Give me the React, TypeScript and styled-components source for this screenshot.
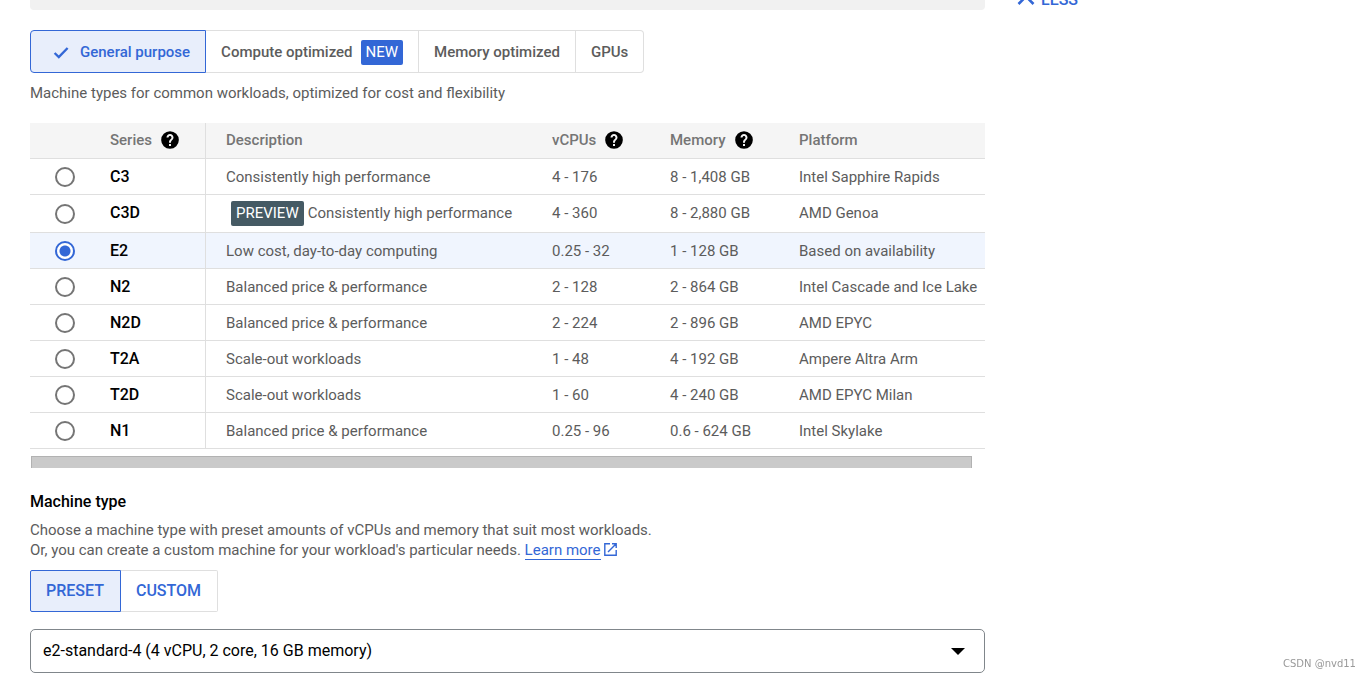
import React, { useState } from "react";
import styled, { createGlobalStyle, css } from "styled-components";

const GlobalStyle = createGlobalStyle`
  *, *::before, *::after { box-sizing: border-box; }
  body {
    margin: 0;
    background: #fff;
    color: #5c5c5c;
    font-family: Roboto, "Liberation Sans", sans-serif;
    font-size: 15px;
    line-height: 20px;
  }
  button, input, select { font: inherit; }
`;

const blue = "#3367d6";
const line = "#dfdfdf";

const Page = styled.div`
  display: grid;
  grid-template-columns: minmax(0, 1fr) 356px;
  column-gap: 30px;
  padding-left: 30px;
`;

const Main = styled.main`
  min-width: 0;
`;

const Aside = styled.aside`
  overflow: hidden;
`;

const LessButton = styled.button`
  display: flex;
  align-items: center;
  gap: 6px;
  margin: -10px 0 0;
  padding: 0 0 0 2px;
  border: 0;
  background: none;
  color: ${blue};
  font-size: 16px;
  font-weight: 500;
  line-height: 20px;
`;

const PanelEnd = styled.div`
  height: 10px;
  border-radius: 0 0 4px 4px;
  background: #f1f1f1;
`;

const Tabs = styled.div`
  display: flex;
  width: max-content;
  margin-top: 20px;
`;

const Toggle = styled.button<{ $active?: boolean; $large?: boolean }>`
  display: flex;
  align-items: center;
  height: 43px;
  padding: 0 15px;
  border: 1px solid ${line};
  border-left-width: 0;
  background: #fff;
  color: #5c5c5c;
  font-weight: 500;
  white-space: nowrap;

  &:first-child { border-left-width: 1px; border-radius: 4px 0 0 4px; }
  &:last-child { border-radius: 0 4px 4px 0; }

  ${(p) =>
    p.$large &&
    css`
      height: 42px;
      padding: 0 16px 0 15px;
      color: ${blue};
      font-size: 16px;
      &:first-child { border-radius: 2px 0 0 2px; }
      &:last-child { border-radius: 0 2px 2px 0; }
    `}

  ${(p) =>
    p.$active &&
    css`
      border-color: ${blue};
      background: #e8eefb;
      color: ${blue};
    `}
`;

const CheckIcon = styled.svg`
  width: 20px;
  height: 20px;
  margin: 0 9px 0 5px;
`;

const Badge = styled.span<{ $tone: "new" | "preview" }>`
  display: inline-block;
  height: 25px;
  padding: 0 5px;
  border-radius: 2px;
  color: #fff;
  font-weight: 400;
  line-height: 25px;
  background: ${(p) => (p.$tone === "new" ? blue : "#455a64")};
  margin: ${(p) => (p.$tone === "new" ? "1px 0 0 8px" : "1px 4px 0 5px")};
`;

const Hint = styled.p`
  margin: 10px 0 0;
`;

const SeriesTable = styled.table`
  width: 100%;
  margin-top: 20px;
  table-layout: fixed;
  border-collapse: separate;
  border-spacing: 0;
`;

const Col = styled.col<{ $w?: number }>`
  width: ${(p) => (p.$w ? `${p.$w}px` : "auto")};
`;

const HeadCell = styled.th<{ $divider?: boolean }>`
  height: 36px;
  padding: 0 0 2px 20px;
  border-bottom: 1px solid ${line};
  border-right: ${(p) => (p.$divider ? `1px solid ${line}` : "0")};
  background: #f5f5f5;
  color: #757575;
  font-weight: 500;
  text-align: left;
`;

const HeadLabel = styled.span`
  display: flex;
  align-items: center;
  gap: 8px;
`;

const Row = styled.tr<{ $selected: boolean; $tall: boolean }>`
  height: ${(p) => (p.$tall ? 38 : 36)}px;
  background: ${(p) => (p.$selected ? "#f0f5fe" : "#fff")};

  & > td:not(:first-child) {
    padding-bottom: ${(p) => (p.$tall ? 2 : 0)}px;
  }
`;

const Cell = styled.td`
  padding: 0 0 0 20px;
  border-bottom: 1px solid ${line};
  white-space: nowrap;
`;

const RadioCell = styled(Cell)`
  padding-left: 25px;
`;

const NameCell = styled(Cell)`
  border-right: 1px solid ${line};
  color: #000;
  font-size: 16px;
  font-weight: 500;
`;

const CellLine = styled.span`
  display: flex;
  align-items: center;
  height: 20px;
`;

const Radio = styled.input`
  display: block;
  appearance: none;
  width: 20px;
  height: 20px;
  margin: 0;
  border: 2px solid #757575;
  border-radius: 50%;
  background: #fff;

  &:checked {
    border-color: ${blue};
    background: radial-gradient(circle, ${blue} 5px, #fff 6px);
  }
`;

const ScrollTrack = styled.div`
  margin-top: 7px;
  padding: 0 13px 0 1px;
`;

const ScrollThumb = styled.div`
  height: 12px;
  border: 1px solid #b2b2b2;
  border-bottom: 0;
  background: #cacaca;
`;

const Title = styled.h2`
  margin: 24px 0 8px;
  color: #000;
  font-size: 16px;
  font-weight: 500;
  line-height: 20px;
`;

const Copy = styled.p`
  margin: 0;
`;

const LearnMore = styled.a`
  display: inline-block;
  height: 20px;
  border-bottom: 1px solid ${blue};
  color: ${blue};
  text-decoration: none;
  line-height: 20px;
  vertical-align: top;
`;

const ExternalIcon = styled.svg`
  width: 13px;
  height: 13px;
  margin-left: 3px;
  vertical-align: -1px;
`;

const ModeTabs = styled(Tabs)`
  margin-top: 10px;
`;

const SelectBox = styled.div`
  display: grid;
  align-items: center;
  margin: 17px 0 4px;

  & > * { grid-area: 1 / 1; }
`;

const Select = styled.select`
  width: 100%;
  height: 44px;
  padding: 0 40px 0 12px;
  appearance: none;
  border: 1px solid #80868b;
  border-radius: 5px;
  background: #fff;
  color: #000;
  font-size: 16px;
`;

const Arrow = styled.svg`
  justify-self: end;
  width: 14px;
  height: 7px;
  margin-right: 20px;
  pointer-events: none;
`;

const Watermark = styled.span`
  position: fixed;
  right: 15px;
  bottom: 6px;
  color: #999;
  font-family: "DejaVu Sans", sans-serif;
  font-size: 10px;
  line-height: 14px;
`;

const HelpIcon = () => (
  <svg width="20" height="20" viewBox="0 0 24 24" aria-hidden="true">
    <path
      fill="#000"
      d="M12 1.4A10.6 10.6 0 1 0 12 22.6A10.6 10.6 0 1 0 12 1.4zm1.2 17.8h-2.4v-2.4h2.4v2.4zm2.07-7.95l-.9.92C13.65 12.9 13.2 13.5 13.2 15.2h-2.4v-.7c0-1.1.45-2.1 1.17-2.83l1.24-1.26c.37-.36.59-.86.59-1.41 0-1-.8-1.8-1.8-1.8s-1.8.8-1.8 1.8H7.8c0-2.3 1.9-4.2 4.2-4.2s4.2 1.9 4.2 4.2c0 .88-.36 1.68-.93 2.25z"
    />
  </svg>
);

const families = [
  { name: "General purpose" },
  { name: "Compute optimized", isNew: true },
  { name: "Memory optimized" },
  { name: "GPUs" },
];

const series = [
  { name: "C3", text: "Consistently high performance", cpu: "4 - 176", memory: "8 - 1,408 GB", platform: "Intel Sapphire Rapids" },
  { name: "C3D", text: "Consistently high performance", cpu: "4 - 360", memory: "8 - 2,880 GB", platform: "AMD Genoa", preview: true },
  { name: "E2", text: "Low cost, day-to-day computing", cpu: "0.25 - 32", memory: "1 - 128 GB", platform: "Based on availability" },
  { name: "N2", text: "Balanced price & performance", cpu: "2 - 128", memory: "2 - 864 GB", platform: "Intel Cascade and Ice Lake" },
  { name: "N2D", text: "Balanced price & performance", cpu: "2 - 224", memory: "2 - 896 GB", platform: "AMD EPYC" },
  { name: "T2A", text: "Scale-out workloads", cpu: "1 - 48", memory: "4 - 192 GB", platform: "Ampere Altra Arm" },
  { name: "T2D", text: "Scale-out workloads", cpu: "1 - 60", memory: "4 - 240 GB", platform: "AMD EPYC Milan" },
  { name: "N1", text: "Balanced price & performance", cpu: "0.25 - 96", memory: "0.6 - 624 GB", platform: "Intel Skylake" },
];

export default function App() {
  const [family, setFamily] = useState("General purpose");
  const [selected, setSelected] = useState("E2");
  const [mode, setMode] = useState("PRESET");

  return (
    <>
      <GlobalStyle />
      <Page>
        <Main>
          <PanelEnd />
          <Tabs>
            {families.map((f) => (
              <Toggle key={f.name} type="button" $active={family === f.name} onClick={() => setFamily(f.name)}>
                {family === f.name && (
                  <CheckIcon viewBox="0 0 20 20" aria-hidden="true">
                    <path d="M3.6 11L7.8 15L16.6 6" fill="none" stroke={blue} strokeWidth="2.4" />
                  </CheckIcon>
                )}
                {f.name}
                {f.isNew && <Badge $tone="new">NEW</Badge>}
              </Toggle>
            ))}
          </Tabs>
          <Hint>Machine types for common workloads, optimized for cost and flexibility</Hint>

          <SeriesTable>
            <colgroup>
              <Col $w={60} />
              <Col $w={116} />
              <Col $w={326} />
              <Col $w={118} />
              <Col $w={129} />
              <Col />
            </colgroup>
            <thead>
              <tr>
                <HeadCell aria-label="Select" />
                <HeadCell $divider><HeadLabel>Series<HelpIcon /></HeadLabel></HeadCell>
                <HeadCell>Description</HeadCell>
                <HeadCell><HeadLabel>vCPUs<HelpIcon /></HeadLabel></HeadCell>
                <HeadCell><HeadLabel>Memory<HelpIcon /></HeadLabel></HeadCell>
                <HeadCell>Platform</HeadCell>
              </tr>
            </thead>
            <tbody>
              {series.map((s) => (
                <Row key={s.name} $selected={selected === s.name} $tall={!!s.preview}>
                  <RadioCell>
                    <Radio
                      type="radio"
                      name="series"
                      id={`series-${s.name}`}
                      checked={selected === s.name}
                      onChange={() => setSelected(s.name)}
                    />
                  </RadioCell>
                  <NameCell><label htmlFor={`series-${s.name}`}>{s.name}</label></NameCell>
                  <Cell>
                    <CellLine>
                      {s.preview && <Badge $tone="preview">PREVIEW</Badge>}
                      {s.text}
                    </CellLine>
                  </Cell>
                  <Cell>{s.cpu}</Cell>
                  <Cell>{s.memory}</Cell>
                  <Cell>{s.platform}</Cell>
                </Row>
              ))}
            </tbody>
          </SeriesTable>
          <ScrollTrack><ScrollThumb /></ScrollTrack>

          <Title>Machine type</Title>
          <Copy>
            Choose a machine type with preset amounts of vCPUs and memory that suit most workloads.
            <br />
            Or, you can create a custom machine for your workload's particular needs.{" "}
            <LearnMore href="#learn-more">Learn more</LearnMore>
            <ExternalIcon viewBox="0 0 13 13" fill="none" stroke={blue} strokeWidth="1.4" aria-hidden="true">
              <path d="M6 .8H.8V12.2H12.2V7M8 .8H12.2V5M12.2 .8L4 9" />
            </ExternalIcon>
          </Copy>
          <ModeTabs>
            {["PRESET", "CUSTOM"].map((m) => (
              <Toggle key={m} type="button" $large $active={mode === m} onClick={() => setMode(m)}>
                {m}
              </Toggle>
            ))}
          </ModeTabs>
          <SelectBox>
            <Select aria-label="Machine type" defaultValue="e2-standard-4">
              <option value="e2-standard-4">e2-standard-4 (4 vCPU, 2 core, 16 GB memory)</option>
            </Select>
            <Arrow viewBox="0 0 14 7" aria-hidden="true">
              <path d="M0 0H14L7 7Z" fill="#000" />
            </Arrow>
          </SelectBox>
        </Main>
        <Aside>
          <LessButton type="button">
            <svg width="18" height="20" viewBox="0 0 18 20" fill="none" stroke={blue} strokeWidth="2.6" aria-hidden="true">
              <path d="M1.5 14L9 6.5L16.5 14" />
            </svg>
            LESS
          </LessButton>
        </Aside>
      </Page>
      <Watermark>CSDN @nvd11</Watermark>
    </>
  );
}
